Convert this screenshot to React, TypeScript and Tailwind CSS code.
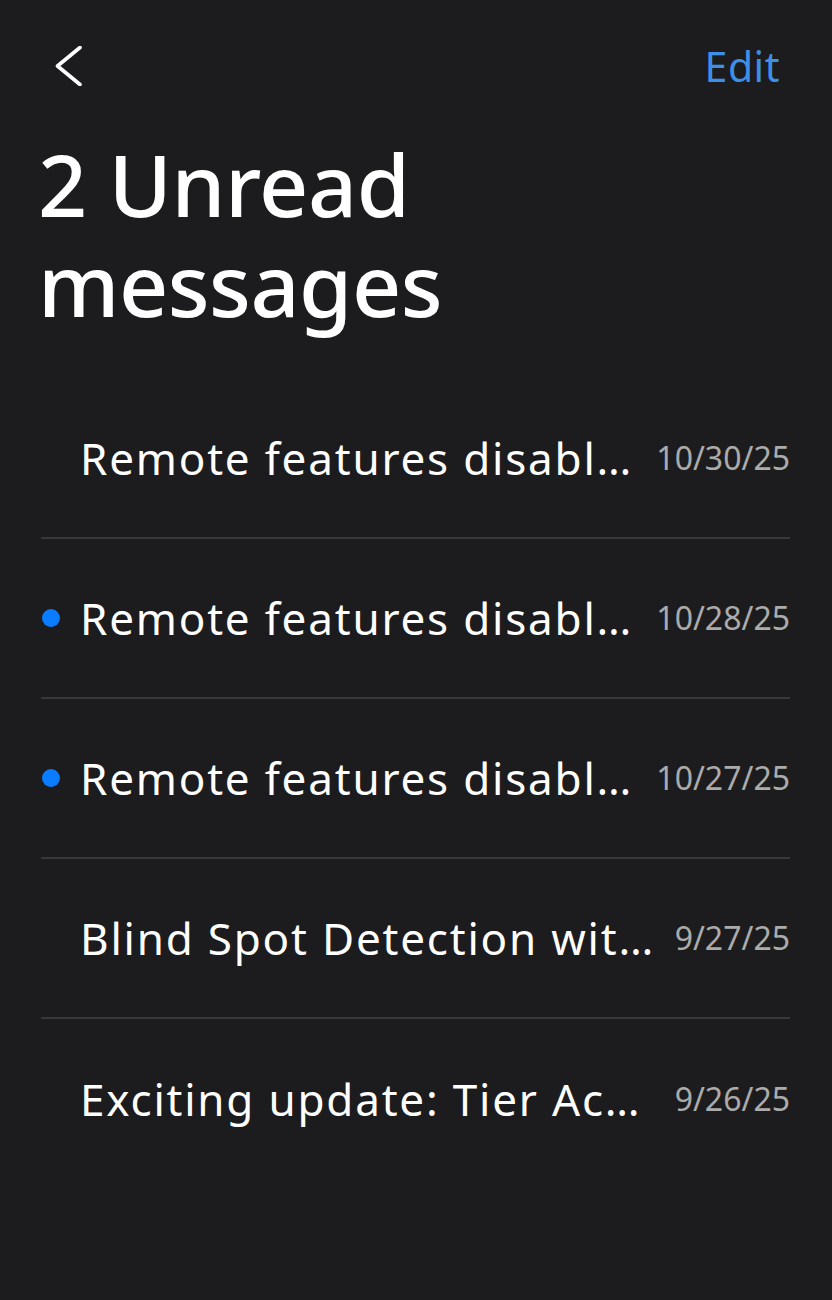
import React from "react";

const rows = [
  { title: "Remote features disabl…", date: "10/30/25", unread: false },
  { title: "Remote features disabl…", date: "10/28/25", unread: true },
  { title: "Remote features disabl…", date: "10/27/25", unread: true },
  { title: "Blind Spot Detection wit…", date: "9/27/25", unread: false },
  { title: "Exciting update: Tier Ac…", date: "9/26/25", unread: false },
];

export default function App() {
  return (
    <div
      className="w-[832px] h-[1300px] bg-[#1c1c1e] text-white overflow-hidden"
      style={{ fontFamily: '"Noto Sans", "Open Sans", sans-serif' }}
    >
      <div className="flex items-center justify-between pt-[46px] h-[86px] pl-[55px] pr-[52px]">
        <svg width="28" height="40" viewBox="0 0 28 40" fill="none">
          <polyline
            points="25,1.5 2.5,20 25,38.5"
            stroke="#ffffff"
            strokeWidth="3.6"
            strokeLinecap="round"
            strokeLinejoin="round"
          />
        </svg>
        <span className="text-[41px] leading-[40px] tracking-[0.5px] text-[#3d8fe8]">Edit</span>
      </div>

      <h1 className="mt-[48px] pl-[38px] text-[86px] leading-[100px] font-medium tracking-[-0.5px]">
        2 Unread
        <br />
        messages
      </h1>

      <div className="mt-[45px] pl-[41px] pr-[42px]">
        {rows.map((r, i) => (
          <div
            key={i}
            className={`flex items-center h-[160px] ${
              i < rows.length - 1 ? "border-b-2 border-[#38383a]" : ""
            }`}
          >
            <div className="w-[39px] shrink-0 flex items-center">
              {r.unread && (
                <div className="ml-[1px] w-[18px] h-[18px] rounded-full bg-[#0a7cff]" />
              )}
            </div>
            <div className="flex-1 min-w-0 whitespace-nowrap text-[44px] leading-[56px] tracking-[1.8px] text-white">
              {r.title}
            </div>
            <div className="shrink-0 pl-[16px] text-[32px] leading-[40px] text-[#ababab]">
              {r.date}
            </div>
          </div>
        ))}
      </div>
    </div>
  );
}
